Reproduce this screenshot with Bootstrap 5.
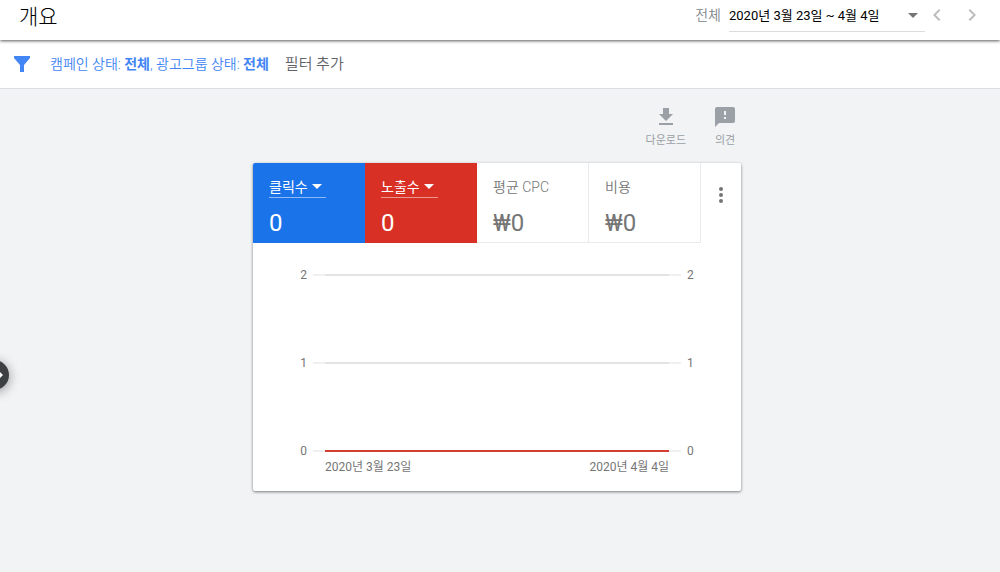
<!DOCTYPE html>
<html lang="ko">
<head>
<meta charset="utf-8">
<meta name="viewport" content="width=device-width, initial-scale=1">
<title>개요</title>
<link href="https://cdn.jsdelivr.net/npm/bootstrap@5.3.0/dist/css/bootstrap.min.css" rel="stylesheet">
<style>
  body { font-family: Roboto, "Noto Sans CJK KR", sans-serif; font-size: 13px; line-height: 20px; background: #f1f3f4; color: #757575; }
  .ko-light { font-weight: 350; }
  svg { display: block; fill: currentColor; }
  .plain { border: 0; background: none; padding: 0; color: inherit; text-align: left; }

  .topbar { height: 40px; padding: 0 16px 0 19px; background: #fff; box-shadow: 0 1px 3px rgba(0,0,0,.65); position: relative; z-index: 1; }
  .topbar h1 { font-size: 21px; line-height: 34px; font-weight: 300; color: #000; }
  .scope { color: #80868b; margin-right: 8px; padding-top: 5px; font-size: 14px; }
  .range { width: 196px; height: 32px; border-bottom: 1px solid #dadce0; color: #000; }
  .range svg { margin-right: 7px; color: #757575; }
  .steps { gap: 11px; color: #bdbdbd; height: 30px; }

  .filters { height: 49px; padding-left: 10px; background: #fff; border-bottom: 1px solid #dadce0; color: #4285f4; }
  .filters strong { font-weight: 700; }
  .filter-text { margin-left: 16px; font-size: 14px; }
  .filter-add { margin-left: 16px; font-size: 15px; color: #5f6368; }

  .board { width: 494px; max-width: 100%; padding-right: 6px; }
  .tools { padding-top: 16px; gap: 27px; height: 74px; color: #9aa0a6; padding-right: 4px; }
  .tools button { font-size: 11px; line-height: 16px; }
  .tools svg { margin-bottom: 4px; }

  .panel { background: #fff; border-radius: 2px; overflow: hidden; box-shadow: 0 1px 3px rgba(0,0,0,.5); }
  .metric { flex: 0 0 112px; height: 80px; padding: 14px 16px 0; border-right: 1px solid #e8eaed; border-bottom: 1px solid #e8eaed; }
  .metric-blue { background: #1a73e8; border-color: #1a73e8; color: #fff; }
  .metric-red { background: #d93025; border-color: #d93025; color: #fff; }
  .metric .pick { width: 57px; height: 21px; gap: 3px; font-size: 14px; border-bottom: 1px solid rgba(255,255,255,.5); }
  .metric .name { height: 21px; font-size: 14px; }
  .metric .amount { font-size: 24px; line-height: 32px; margin-top: 9px; }
  .more { padding-top: 20px; color: #757575; }

  .chart { padding: 24px 40px 16px; font-size: 12px; line-height: 16px; }
  .level { gap: 6px; margin-bottom: 72px; }
  .level span { width: 14px; text-align: right; }
  .level span:last-child { text-align: left; }
  .stroke { height: 2px; background: #e4e4e4; border: solid #f0f0f0; border-width: 0 12px; }
  .stroke-red { background: #d23f31; }
  .ends { padding: 0 32px; }

  .drawer { left: -21px; top: 360px; width: 30px; height: 30px; border-radius: 50%; background: #3c4043; color: #fff; box-shadow: 0 2px 12px rgba(0,0,0,.4); }
  .drawer svg { margin-right: 6px; }
</style>
</head>
<body class="min-vh-100">
<header class="topbar d-flex justify-content-between">
  <h1 class="mb-0">개요</h1>
  <div class="d-flex">
    <span class="scope ko-light">전체</span>
    <button type="button" class="plain range d-flex align-items-center justify-content-between">
      <span>2020년 3월 23일 ~ 4월 4일</span>
      <svg width="10" height="5" viewBox="0 0 10 5"><path d="M0 0h10L5 5z"/></svg>
    </button>
    <div class="steps d-flex align-items-center">
      <button type="button" class="plain" aria-label="이전"><svg width="24" height="24" viewBox="0 0 24 24"><path d="M15.4 7.4 14 6l-6 6 6 6 1.4-1.4-4.6-4.6z"/></svg></button>
      <button type="button" class="plain" aria-label="다음"><svg width="24" height="24" viewBox="0 0 24 24"><path d="M10 6 8.600 7.400 13.200 12l-4.600 4.600L10 18l6-6z"/></svg></button>
    </div>
  </div>
</header>

<section class="filters d-flex align-items-center">
  <button type="button" class="plain" aria-label="필터"><svg width="24" height="24" viewBox="0 0 24 24"><path d="M4 4h16v2l-6 7v7h-4v-7L4 6z"/></svg></button>
  <a href="#" class="plain filter-text ko-light text-decoration-none">캠페인 상태: <strong>전체</strong>, 광고그룹 상태: <strong>전체</strong></a>
  <button type="button" class="plain filter-add ko-light">필터 추가</button>
</section>

<main class="board mx-auto pb-5">
  <div class="tools d-flex justify-content-end align-items-start">
    <button type="button" class="plain d-flex flex-column align-items-center"><svg width="24" height="24" viewBox="0 0 24 24"><path d="M19 9h-4V3H9v6H5l7 7zM5 18v2h14v-2z"/></svg>다운로드</button>
    <button type="button" class="plain d-flex flex-column align-items-center"><svg width="24" height="24" viewBox="0 0 24 24"><path fill-rule="evenodd" d="M20 2H4a2 2 0 0 0-2 2v18l4-4h14a2 2 0 0 0 2-2V4a2 2 0 0 0-2-2zm-7 12h-2v-2h2zm0-4h-2V6h2z"/></svg>의견</button>
  </div>

  <div class="panel">
    <div class="d-flex">
      <div class="metric metric-blue">
        <button type="button" class="plain pick d-flex align-items-center">클릭수 <svg width="12" height="6" viewBox="0 0 12 6"><path d="M1 0h10L6 5z"/></svg></button>
        <div class="amount">0</div>
      </div>
      <div class="metric metric-red">
        <button type="button" class="plain pick d-flex align-items-center">노출수 <svg width="12" height="6" viewBox="0 0 12 6"><path d="M1 0h10L6 5z"/></svg></button>
        <div class="amount">0</div>
      </div>
      <div class="metric">
        <div class="name ko-light">평균 CPC</div>
        <div class="amount">₩0</div>
      </div>
      <div class="metric">
        <div class="name ko-light">비용</div>
        <div class="amount">₩0</div>
      </div>
      <div class="more flex-grow-1 d-flex justify-content-center align-items-start">
        <button type="button" class="plain" aria-label="더보기"><svg width="24" height="24" viewBox="0 0 24 24"><circle cx="12" cy="6" r="2"/><circle cx="12" cy="12" r="2"/><circle cx="12" cy="18" r="2"/></svg></button>
      </div>
    </div>
    <div class="chart">
      <div class="level d-flex align-items-center"><span>2</span><div class="stroke flex-grow-1"></div><span>2</span></div>
      <div class="level d-flex align-items-center"><span>1</span><div class="stroke flex-grow-1"></div><span>1</span></div>
      <div class="level d-flex align-items-center mb-0"><span>0</span><div class="stroke stroke-red flex-grow-1"></div><span>0</span></div>
      <div class="ends d-flex justify-content-between"><span>2020년 3월 23일</span><span>2020년 4월 4일</span></div>
    </div>
  </div>
</main>

<button type="button" class="plain drawer position-fixed d-flex align-items-center justify-content-end" aria-label="메뉴 열기">
  <svg width="5" height="10" viewBox="0 0 5 10"><path d="M0 0l5 5-5 5z"/></svg>
</button>
<script src="https://cdn.jsdelivr.net/npm/bootstrap@5.3.0/dist/js/bootstrap.bundle.min.js"></script>
</body>
</html>
